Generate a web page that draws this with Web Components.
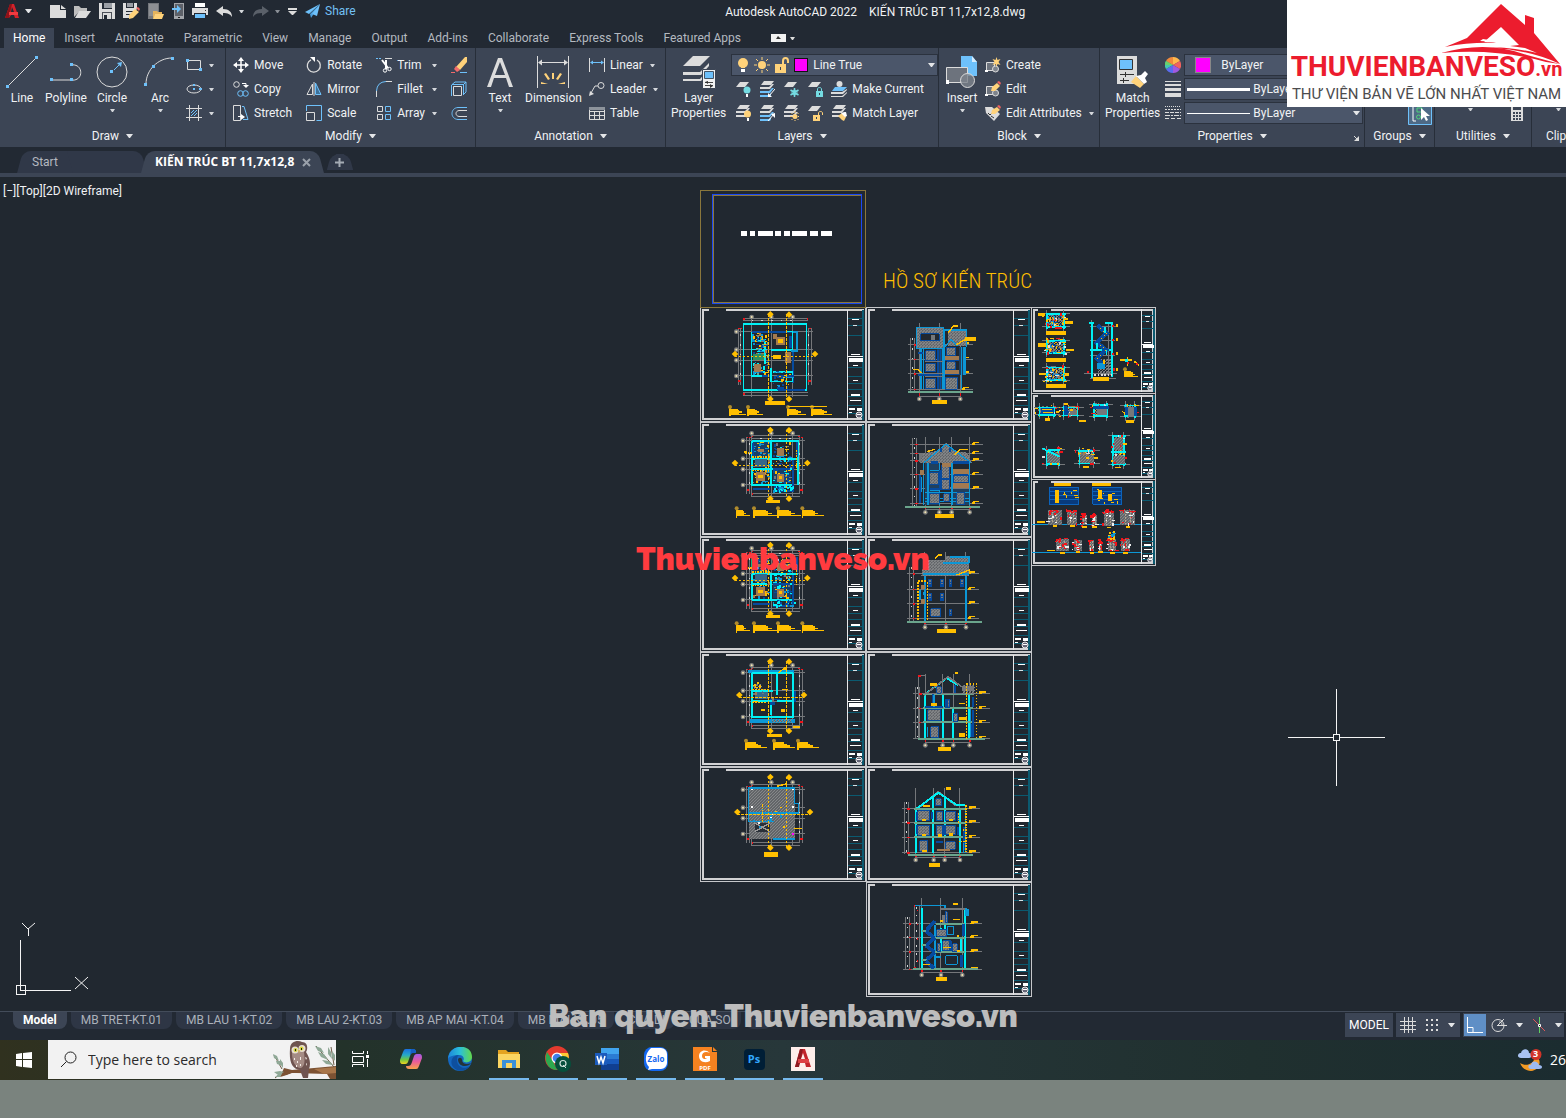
<!DOCTYPE html>
<html lang="en">
<head>
<meta charset="utf-8">
<meta name="viewport" content="width=device-width, initial-scale=1">
<title>Autodesk AutoCAD 2022</title>
<style>
  html, body { margin: 0; height: 100%; }
  body {
    background: #7a837e;
    color: #f0f2f4;
    font-family: Roboto, "Noto Sans", sans-serif;
    font-size: 12px;
    line-height: 16px;
    overflow: hidden;
  }
</style>
</head>
<body>
<cad-app></cad-app>

<script>
/* ---------- icons: [width, height, markup] ---------- */
const W = '#dcdcdc', BL = '#6ec1fb', YE = '#ffd27a', TE = '#74dbe2';
const SHEETS = `<g fill="${W}"><path d="M5 0h10l-3 4H2z"/><path d="M1 6h9l3-3h2l-4 5H1z"/><path d="M1 10h9l3-3h2l-4 5H1z"/></g>`;
const ONE_SHEET = `<path d="M5 1h9l-4 5H1z" fill="${W}"/>`;
const MIX_SHEETS = `<path d="M5 0h10l-3 4H2z" fill="${W}"/><path d="M1 6h9l3-3h2l-4 5H1z" fill="${W}"/><path d="M1 10h9l3-3h2l-4 5H1z" fill="${BL}"/><path d="M1 14h9l2-2v2l-1 2H1z" fill="${BL}"/>`;

const ICONS = {
  logoA: [16, 16, `<path d="M1 15 6 1h4l5 14h-4l-1-3H7l-2 3zM7 9h3L8 4z" fill="#d3222a"/><path d="M1 15 6 1h2L5 15z" fill="#8e1218"/><path d="M5 9h9v3H5z" fill="#ef3b40"/>`],
  caret: [7, 4, `<path d="M0 0h7L4 4H3z" fill="#e4e6e8"/>`],
  caretS: [5, 3, `<path d="M0 0h5L3 3H2z" fill="#d4d7db"/>`],
  caretDim: [5, 3, `<path d="M0 0h5L3 3H2z" fill="#8a8f96"/>`],
  fileNew: [16, 13, `<path d="M0 0h10v5h6v8H0z" fill="${W}"/><path d="M11 0l5 4h-5z" fill="${W}"/>`],
  open: [17, 13, `<path d="M0 12V1h5l2 2h6v3H6z" fill="#bdbdbd"/><path d="M5 6h12l-5 7H1z" fill="${W}"/>`],
  save: [16, 16, `<path d="M0 0h3v6h10V0h3v16H0z" fill="${W}"/><path d="M5 0h8v5H5z" fill="#9a9ea4"/><path d="M3 9h10v7H3z" fill="#4c5058"/><path d="M4 10h8v6H4z" fill="${W}"/><path d="M5 12h3v4H5z" fill="#222933"/>`],
  saveAs: [17, 16, `<path d="M0 0h3v5h8V0h3v6l-7 9H0z" fill="${W}"/><path d="M4 0h6v4H4z" fill="#9a9ea4"/><path d="M3 8h7v1H3zM3 11h5v1H3z" fill="#222933"/><path d="M6 12l6-6 4 3-6 6-4 1z" fill="${YE}"/><path d="M13 5l2-1 2 2-1 2z" fill="#f0625f"/>`],
  webOpen: [16, 16, `<path d="M0 0h11v10H6v6H0z" fill="#74777c"/><path d="M1 1h9v12H1z" fill="#8d8f93"/><path d="M5 8h4l1 1h4v2H7l-2 5z" fill="#e5b35c"/><path d="M7 11h9l-2 5H5z" fill="${YE}"/>`],
  webSave: [12, 16, `<path d="M2 0h10v16H2z" fill="#a2a5aa"/><path d="M3 1h8v12H3z" fill="#5d6169"/><path d="M6 14h2v1H6z" fill="#222"/><path d="M0 5h5V2l4 4-4 4V7H0z" fill="${BL}"/>`],
  print: [16, 16, `<path d="M3 0h10v4H3z" fill="#fff"/><path d="M0 5h16v7h-2v-2H2v2H0z" fill="${W}"/><path d="M3 11h10v4H3z" fill="${BL}"/><path d="M13 7h1v1h-1z" fill="#333"/>`],
  undo: [17, 11, `<path d="M7 0v3c6 0 9 3 9 8-2-3-4-4-9-4v3L0 5z" fill="${W}"/>`],
  redo: [17, 11, `<path d="M10 0v3C4 3 1 6 1 11c2-3 4-4 9-4v3l7-5z" fill="#5a6069"/>`],
  custom: [9, 7, `<path d="M0 0h9v2H0zM0 3h9L5 7H4z" fill="${W}"/>`],
  send: [16, 14, `<path d="M15 0 0 8l4 2z" fill="${BL}"/><path d="M15 0 5 10l1 4 2-3z" fill="#4b9fdd"/><path d="M15 0 7 10l5 2z" fill="${BL}"/>`],
  minimize: [24, 8, `<path d="M0 0h15v8H0z" fill="#f2f2f2"/><path d="M5 5l2-3 3 3z" fill="#333"/><path d="M19 3h5l-2 3h-1z" fill="${W}"/>`],
  line: [32, 32, `<path d="M2 30 30 2" stroke="${W}" fill="none"/><path d="M0 29h3v3H0zM29 0h3v3h-3z" fill="${BL}"/>`],
  polyline: [32, 32, `<path d="M1 24h20M21 9c13-2 13 17 0 15" stroke="${W}" fill="none"/><path d="M0 22h3v3H0zM20 22h3v3h-3zM20 7h3v3h-3z" fill="${BL}"/>`],
  circle: [32, 32, `<circle cx="16" cy="16" r="15" stroke="${W}" fill="none"/><path d="M18 14l7-7" stroke="${BL}"/><path d="M26 6l-5 1 4 4zM14 14h3v3h-3z" fill="${BL}"/>`],
  arc: [32, 32, `<path d="M2 28C2 14 14 2 28 2" stroke="${W}" fill="none"/><path d="M0 27h3v3H0zM8 9h3v3H8zM27 1h3v3h-3z" fill="${BL}"/>`],
  rect: [16, 16, `<path d="M1.500 3.500h13v9h-13z" stroke="${W}" fill="none"/><path d="M0 2h3v3H0zM13 11h3v3h-3z" fill="${BL}"/>`],
  ellipse: [16, 16, `<ellipse cx="8" cy="8" rx="7" ry="4" stroke="${W}" fill="none"/><path d="M7 7h2v2H7zM7 3h2v2H7zM13 7h3v2h-3z" fill="${BL}"/>`],
  hatch: [16, 16, `<path d="M3.500 0v16M12.500 0v16M0 3.500h16M0 12.500h16" stroke="${W}"/><path d="M5 8l3-3M5 11l6-6M8 11l3-3" stroke="${BL}"/>`],
  move: [16, 16, `<path d="M8 2v12M2 8h12" stroke="#fff" stroke-width="1.500"/><path d="M8 0l3 4H5zM8 16l3-4H5zM0 8l4-3v6zM16 8l-4-3v6z" fill="#fff"/>`],
  copy: [16, 16, `<circle cx="3.500" cy="3.500" r="2.800" stroke="${W}" fill="none"/><path d="M9 2.500h4V5" stroke="#fff" fill="none"/><path d="M10 4h6l-3 3z" fill="#fff"/><circle cx="7.500" cy="12.500" r="2.800" stroke="${BL}" fill="none"/><circle cx="12.500" cy="12.500" r="2.800" stroke="${BL}" fill="none"/>`],
  stretch: [16, 16, `<path d="M.5.500h7v15h-7z" stroke="${W}" fill="none"/><path d="M9 1.500h2l4 13h-5" stroke="${BL}" fill="none"/><path d="M5 11.500h4" stroke="#fff"/><path d="M8 9l4 3-4 3z" fill="#fff"/>`],
  rotate: [16, 16, `<path d="M11 3a6.500 6.500 0 1 1-6-.2" stroke="${W}" fill="none" stroke-width="1.300"/><path d="M4 0h5v5z" fill="#fff"/>`],
  mirror: [16, 16, `<path d="M6.500 3v10.500H1z" stroke="${W}" fill="none"/><path d="M8 1v14" stroke="${W}"/><path d="M9.500 2v11.500H15z" stroke="${BL}" fill="#3f729b"/>`],
  scale: [16, 16, `<path d="M.5 6V.5h15v15h-5" stroke="${BL}" fill="none"/><path d="M.5 7.500h8v8h-8z" stroke="${W}" fill="none"/>`],
  trim: [16, 16, `<path d="M0 1.500h6" stroke="${BL}" stroke-dasharray="2 1"/><path d="M9 1.500h7" stroke="${W}"/><path d="M6 3l6 8M10 3l0 9" stroke="#fff" stroke-width="2"/><circle cx="13.500" cy="12" r="1.700" stroke="#fff" fill="none"/><circle cx="9" cy="13.500" r="1.700" stroke="#fff" fill="none"/>`],
  fillet: [16, 16, `<path d="M.5 10v6M10 .5h6" stroke="${W}"/><path d="M.5 10Q1 1 10 .5" stroke="${BL}" fill="none"/>`],
  array: [16, 16, `<path d="M1.500 1.500h5v5h-5zM1.500 9.500h5v5h-5z" stroke="${W}" fill="none"/><path d="M9.500 1.500h5v5h-5zM9.500 9.500h5v5h-5z" stroke="${BL}" fill="none"/>`],
  erase: [16, 16, `<path d="M16 0v5l-7 8-4-3 9-10z" fill="${YE}"/><path d="M5 9l4 4-3 2-3-3z" fill="#f26a6a"/><path d="M0 15.500h4" stroke="#f26a6a"/><path d="M9 15.500h7" stroke="${BL}"/>`],
  explode: [16, 16, `<path d="M2.500 5.500h8v9h-8z" stroke="${W}" fill="none"/><path d="M.5 15V4L4 1h11v10l-3 3M1 3.500h11.500V14M12 4l3-3" stroke="${BL}" fill="none"/>`],
  offset: [16, 16, `<path d="M16 2.500H7C-1 3-1 14 7 14.500h9" stroke="${BL}" fill="none"/><path d="M16 5.500H8C4 6 4 11 8 11.500h8" stroke="${W}" fill="none"/>`],
  text: [32, 32, `<path d="M3 31 14 2h4l11 29h-4l-3-9H10l-3 9zm8-12h10L16 6z" fill="${W}"/>`],
  dimension: [32, 32, `<path d="M.5 0v32M31.500 0v32M2 6.500h28" stroke="${W}"/><path d="M1 6.500l4-3v6zM31 6.500l-4-3v6z" fill="${W}"/><path d="M15 17h2v6h-2zM7 18l2-1 4 6-2 1zM25 18l-2-1-4 6 2 1zM4 26l7 2H4zM28 26l-7 2h7z" fill="${YE}"/>`],
  linear: [16, 16, `<path d="M.5 1v14M15.500 1v14" stroke="${W}"/><path d="M2 5.500h12" stroke="${BL}"/><path d="M1 5.500l3-2v4zM15 5.500l-3-2v4z" fill="${BL}"/>`],
  leader: [16, 16, `<circle cx="12" cy="4.500" r="3" stroke="${W}" fill="none"/><path d="M9 5H6l-4 7" stroke="${W}" fill="none"/><path d="M0 15l1-5 4 3z" fill="${W}"/>`],
  table: [16, 16, `<path d="M.5 2.500h15v12H.5zM0 6.500h16M0 10.500h16M5.500 6v8M10.500 6v8" stroke="${W}" fill="none"/><path d="M0 2h16v3H0z" fill="#8d939b"/>`],
  layerProps: [34, 34, `<g fill="${W}"><path d="M11 0h17L18 10H1z"/><path d="M1 16h17l9-9v3l-8 9H1z"/><path d="M1 23h17l7-8v3l-6 7H1z"/></g><path d="M20.500 13.500h13v19h-13z" fill="#f2f2f2" stroke="#3c4555"/><path d="M22.500 15.500h9v7h-9z" fill="${BL}" stroke="#456"/><path d="M23 26.500h8M23 29.500h8" stroke="#444"/><path d="M26 25v3l-3-2zM28 28l3 2-3 2z" fill="#333"/>`],
  bulb: [12, 16, `<circle cx="6" cy="6" r="5" fill="${YE}"/><path d="M4 9h4v2H4z" fill="${YE}"/><path d="M4 12h4v3H4z" fill="#fff"/>`],
  sun: [16, 16, `<circle cx="8" cy="8" r="4" fill="${YE}"/><path d="M8 0v3M8 13v3M0 8h3M13 8h3M2 2l2 2M12 12l2 2M14 2l-2 2M2 14l2-2" stroke="${YE}"/>`],
  unlock: [14, 16, `<path d="M0 7h11v9H0z" fill="${YE}"/><path d="M8 7V4c0-4 5-4 5 0v2" stroke="${YE}" stroke-width="2" fill="none"/><path d="M5 10h1v3H5z" fill="#3c4555"/>`],
  layOff: [16, 16, `${ONE_SHEET}<circle cx="12" cy="9" r="3.500" fill="${TE}"/><path d="M11 13h2v3h-2z" fill="#fff"/>`],
  layIso: [16, 16, `${MIX_SHEETS}<path d="M16 8l-6 7" stroke="#fff"/><path d="M9 16v-4l4 4z" fill="#fff"/>`],
  layFrz: [16, 16, `${ONE_SHEET}<path d="M11.500 7v9M7.500 9l8 5M15.500 9l-8 5" stroke="${TE}" stroke-width="1.500"/><circle cx="11.500" cy="11.500" r="2.500" fill="none" stroke="${TE}"/>`],
  layLock: [16, 16, `${ONE_SHEET}<path d="M9 10h7v6H9z" fill="${TE}"/><path d="M10.500 10V8c0-2 4-2 4 0v2" stroke="${TE}" fill="none"/><path d="M12 12h1v2h-1z" fill="#345"/>`],
  layOn: [16, 16, `${SHEETS}<circle cx="12.500" cy="9" r="3.500" fill="${YE}"/><path d="M12 13h2v3h-2z" fill="#fff"/>`],
  layUniso: [16, 16, `${MIX_SHEETS}<path d="M15 9l-6 7" stroke="#fff"/><path d="M16 8v5l-4-4z" fill="#fff"/>`],
  layThaw: [16, 16, `${SHEETS}<circle cx="12" cy="11.500" r="2.500" fill="${YE}"/><path d="M12 6v2M12 15v1M7 11.500h2M15 11.500h1M8.500 8l1 1M15.500 8l-1 1M8.500 15l1-1M15.500 15l-1-1" stroke="${YE}"/>`],
  layUnlock: [16, 16, `${ONE_SHEET}<path d="M6 10h7v6H6z" fill="${YE}"/><path d="M11.500 10V8c0-2 4-2 4 0v2" stroke="${YE}" fill="none"/><path d="M9 12h1v2H9z" fill="#345"/>`],
  makeCur: [16, 16, `<path d="M4 6h12l-4 4H1z" fill="${BL}"/><circle cx="8.500" cy="3" r="3" fill="${W}"/><path d="M0 11h11l5-3v1l-4 4H0zM0 15h11l5-4v1l-4 4H0z" fill="${W}"/>`],
  matchLay: [16, 16, `${SHEETS}<path d="M7 11l4-3 4 4-2 4-2-1z" fill="${YE}"/><path d="M10 8l5-1 1 4-2 1z" fill="#fff"/>`],
  insert: [32, 34, `<path d="M15 0h11l5 6v14H15z" fill="${BL}"/><path d="M26 0v6h5z" fill="#d5ecfd"/><path d="M.5 11.500h21v15H.5z" stroke="${W}" fill="#6d737d"/><circle cx="21.500" cy="24.500" r="7" stroke="${W}" fill="#7d838ccc"/><path d="M0 24h3v4H0z" fill="#fff"/>`],
  create: [16, 16, `<path d="M1.500 5.500h8v8h-8z" stroke="${W}" fill="#6d737d"/><circle cx="10.500" cy="12" r="3" stroke="${W}" fill="#7d838c"/><path d="M11.500 0l1 3 3-1-2 3 2 3-3-1-1 3-1-3-3 1 2-3-2-3 3 1z" fill="${YE}"/><path d="M0 13h3v2H0z" fill="#fff"/>`],
  edit: [16, 16, `<path d="M1.500 5.500h8v8h-8z" stroke="${W}" fill="#6d737d"/><circle cx="10.500" cy="12" r="3" stroke="${W}" fill="#7d838c"/><path d="M6 10l1-4 5-4 3 3-5 5z" fill="${YE}"/><path d="M12 1l2-1 2 2-1 2z" fill="#f0625f"/><path d="M0 13h3v2H0z" fill="#fff"/>`],
  editAttr: [16, 16, `<path d="M0 2h7l8 7-6 7-8-8z" fill="${W}"/><path d="M3 8l2 2 2-2M6 11l3 2" stroke="#333" fill="none"/><path d="M6 9l1-4 5-3 3 3-5 4z" fill="${YE}"/><path d="M12 1l2-1 2 2-1 2z" fill="#f0625f"/>`],
  matchProps: [32, 34, `<path d="M0 0h20v28H0z" fill="${W}"/><path d="M2.500 3.500h13v10h-13z" fill="${BL}" stroke="#333"/><path d="M3 18.500h14M3 24.500h9M8.500 16v5M6.500 22v5" stroke="#333"/><path d="M14 26l5-6 8 8-4 4z" fill="${YE}"/><path d="M19 20l5-1 4-4 3 3-3 4 2 4-3 2z" fill="#fff"/>`],
  wheel: [16, 16, `<path d="M8 8V0a8 8 0 0 1 7 4z" fill="#ffb84d"/><path d="M8 8l7-4a8 8 0 0 1 0 8z" fill="#f0625f"/><path d="M8 8l7 4a8 8 0 0 1-7 4z" fill="#a05ae0"/><path d="M8 8v8a8 8 0 0 1-7-4z" fill="#5a6cf0"/><path d="M8 8l-7 4a8 8 0 0 1 0-8z" fill="#45c8b0"/><path d="M8 8 1 4a8 8 0 0 1 7-4z" fill="#f08a3c"/><path d="M8 8 1 4a8 8 0 0 0-1 4z" fill="#6bd06b"/>`],
  lineWt: [16, 16, `<path d="M0 0h16v1H0zM0 3h16v2H0zM0 7h16v3H0zM0 12h16v4H0z" fill="${W}"/>`],
  lineTp: [16, 16, `<g stroke="${W}"><path d="M0 1.500h16" stroke-dasharray="1 1"/><path d="M0 4.500h16" stroke-dasharray="2 1"/><path d="M0 7.500h16" stroke-dasharray="4 1"/><path d="M0 10.500h16" stroke-dasharray="5 1 2 1"/><path d="M0 13.500h16" stroke-dasharray="4 2"/></g>`],
  launch: [5, 5, `<path d="M0 0l3 3" stroke="${W}"/><path d="M5 0v5H0z" fill="${W}"/>`],
  group: [24, 22, `<path d="M.5.500h23v21H.5z" fill="#4e6a86" stroke="${BL}"/><path d="M8 3H5v15h3" stroke="#fff" fill="none"/><path d="M9 5h5v4H9z" stroke="#4fd27a" fill="none"/><circle cx="10.500" cy="14" r="2" stroke="#4fd27a" fill="none"/><path d="M13 5v12l3-3 2 4 2-1-2-4h4z" fill="#fff"/>`],
  calc: [12, 16, `<path d="M0 0h12v16H0z" fill="${W}"/><path d="M2 2h8v3H2zM2 7h2v2H2zM5 7h2v2H5zM8 7h2v2H8zM2 10h2v2H2zM5 10h2v2H5zM8 10h2v2H8zM2 13h2v2H2zM5 13h2v2H5zM8 13h2v2H8z" fill="#3c4555"/>`],
  close: [9, 9, `<path d="M1 1l7 7M8 1 1 8" stroke="#9aa1aa" stroke-width="2"/>`],
  plus: [9, 9, `<path d="M4.500 0v9M0 4.500h9" stroke="#a4abb4" stroke-width="2"/>`],
  grid: [16, 16, `<path d="M4.500 0v16M8.500 0v16M12.500 0v16M0 4.500h16M0 8.500h16M0 12.500h16" stroke="${W}"/>`],
  snap: [14, 14, `<path d="M1 1h2v2H1zM6 1h2v2H6zM11 1h2v2h-2zM1 6h2v2H1zM6 6h2v2H6zM11 6h2v2h-2zM1 11h2v2H1zM6 11h2v2H6zM11 11h2v2h-2z" fill="${W}"/>`],
  ortho: [22, 22, `<path d="M0 0h22v22H0z" fill="#5f8fc6"/><path d="M3.500 3v15.500H19" stroke="#fff" fill="none"/><path d="M4 13.500h5V18" stroke="#fff" fill="none"/>`],
  polar: [16, 16, `<circle cx="7" cy="8.500" r="6" stroke="${W}" fill="none"/><path d="M6 8.500h10M6 9l7-7M11 8c0-3-2-3-3-3" stroke="${W}" fill="none"/>`],
  track: [14, 16, `<path d="M1 2l12 12" stroke="#e05a5a"/><path d="M7.500 0v16" stroke="#5fd05f"/><path d="M6.500 7.500h2v2h-2z" fill="#222" stroke="#fff"/>`],
  windows: [16, 16, `<path d="M0 2l6-1v6H0zM7 1l9-1v7H7zM0 8h6v7l-6-1zM7 8h9v8l-9-1z" fill="#fff"/>`],
  search: [17, 17, `<circle cx="10.500" cy="6.500" r="5.500" stroke="#222" fill="none"/><path d="M6.500 10.500 1 16" stroke="#222"/>`],
  taskView: [17, 16, `<path d="M.5 0v2.500h11V0M.5 16v-2.500h11V16M.5 5.500h11v6H.5zM15.500 0v3M15.500 8v8" stroke="#fff" fill="none"/><path d="M14 4h3v3h-3z" fill="#fff"/>`],
  copilot: [22, 22, `<defs><linearGradient id="g1" x2="0" y2="1"><stop offset="0" stop-color="#1a6fe0"/><stop offset=".4" stop-color="#25a8c8"/><stop offset=".7" stop-color="#6cc644"/><stop offset="1" stop-color="#f3d21f"/></linearGradient><linearGradient id="g2" x2="0" y2="1"><stop offset="0" stop-color="#a55be8"/><stop offset=".5" stop-color="#e85b9a"/><stop offset="1" stop-color="#f6a24a"/></linearGradient></defs><path d="M6 1h7c2 0 3 1 3 3h-2c-2 0-3 1-4 4l-2 6c-1 2-2 2-4 2H3c-3 0-3-2-3-4l3-8c1-2 1-3 3-3z" fill="url(#g1)"/><path d="M16 21H9c-2 0-3-1-3-3h2c2 0 3-1 4-4l2-6c1-2 2-2 4-2h1c3 0 3 2 3 4l-3 8c-1 2-1 3-3 3z" fill="url(#g2)"/><path d="M11 1h2c2 0 3 1 3 4h-2c-2 0-3 0-4 3z" fill="#155fc4"/>`],
  edge: [24, 24, `<defs><linearGradient id="e1"><stop offset="0" stop-color="#1c86dc"/><stop offset=".5" stop-color="#2bc0d8"/><stop offset="1" stop-color="#63d94a"/></linearGradient></defs><circle cx="12" cy="12" r="12" fill="#1467bf"/><path d="M0 12C1-4 24-4 24 10c0 5-6 7-9 4 2-3 0-6-4-6C6 8 1 9 0 12z" fill="url(#e1)"/><path d="M9 13c0 7 7 10 13 6-4 6-13 6-17 1-4-6 0-12 6-12-2 1-2 3-2 5z" fill="#0e4f9e"/><path d="M10 13c0-3 4-3 4 0 0 4 5 5 9 3-2 4-12 5-13-3z" fill="#24343a"/>`],
  folder: [22, 18, `<path d="M0 0h8l2 2h11v15H0z" fill="#e4a421"/><path d="M0 4h22v14H0z" fill="#fbd662"/><path d="M4 10h14v8H4z" fill="#3c91d8"/><path d="M8 13h6v5H8z" fill="#fbd662"/>`],
  chrome: [26, 26, `<circle cx="12" cy="12" r="12" fill="#e33b2e"/><path d="M2 6l6 9 4 9C3 24-2 14 2 6z" fill="#2da94f"/><path d="M12 7h11c3 8-3 17-11 17l5-9z" fill="#fcc934"/><circle cx="12" cy="12" r="5.500" fill="#fff"/><circle cx="12" cy="12" r="4.300" fill="#3f7fea"/><circle cx="18" cy="18" r="8" fill="#06503c"/><circle cx="18" cy="17.500" r="3" fill="none" stroke="#cfe3dc" stroke-width="1.200"/><path d="M18 19l3 3" stroke="#cfe3dc"/>`],
  zaloBubble: [24, 24, `<path d="M0 8a8 8 0 0 1 8-8h8a8 8 0 0 1 8 8v8a8 8 0 0 1-8 8H8a8 8 0 0 1-8-8z" fill="#1468f0"/><path d="M7 1h10a6 6 0 0 1 6 6v9a6 6 0 0 1-6 6H8l-4 1 1-3C1 16 0 7 7 1z" fill="#fff"/>`],
  foxit: [24, 24, `<path d="M0 0h19v5h5v19H0z" fill="#f58220"/><path d="M20 0l4 4h-4z" fill="#f58220"/><path d="M17 6C12 1 6 4 6 9s5 8 11 5V9h-5v2h2c-2 2-5 1-5-2 0-4 4-5 8-3z" fill="#fff"/>`],
  acad: [24, 24, `<path d="M0 0h24v24H0z" fill="#fdeeea"/><path d="M4 20 9 2h5l6 18h-5l-1-4H9l-2 4zM10 12h4l-2-6z" fill="#c2242b"/><path d="M4 20 9 2h3L8 20z" fill="#8e1a20"/><path d="M7 12h11v4H7z" fill="#dd4044"/>`],
  word: [24, 22, `<path d="M6 0h18v6H6z" fill="#41a5ee"/><path d="M6 6h18v5H6z" fill="#2b7cd3"/><path d="M6 11h18v5H6z" fill="#185abd"/><path d="M6 16h18v6H6z" fill="#103f91"/><path d="M0 5h12v12H0z" fill="#1b5bbd"/><path d="M2 8l2 7 2-6 2 6 2-7" stroke="#fff" stroke-width="1.500" fill="none"/>`],
  weather: [24, 22, `<path d="M2 14c6 4 14 1 15-6 8 1 5 14-4 14-5 0-9-3-11-8z" fill="#f49b24"/><path d="M3 9c-5 0-3-6 0-5 1-5 8-5 8 0 4 0 3 5 0 5z" fill="#a9c3f2"/><path d="M13 20c-4 0-3-5 0-4 1-5 7-4 8 0 4 0 4 4 0 4z" fill="#9dbaf0"/><circle cx="18" cy="5.500" r="5.500" fill="#d13428"/>`],
  owl: [64, 38, `<path d="M12 27l8 2 22-2 22-2v13H58l-3-5-33-1-14 4z" fill="#7c5233"/><path d="M42 28l22-2v6l-12 1z" fill="#a8764a"/><path d="M20 32l33 2 4 4H6z" fill="#f2f2f2"/><path d="M10 28 2 14M12 30l-9 7M62 26 44 5M62 24l-3-18" stroke="#6b5a44" fill="none"/><path d="M1 13l4 2 2 5-5-3zM4 20l5 0 2 5-6-2zM8 18l3 4v5l-3-4zM2 31l6-1 4 1-6 3zM3 36l5-4 3-1-3 5zM43 5l6 2 3 5-6-2zM46 11l6 2 4 6-7-3zM56 6l3 5 1 7-4-5zM60 10l3 4v6l-3-4zM50 19l7 1 4 4-7-1z" fill="#8fa896"/><path d="M18 8c0-8 8-9 12-7 6 0 6 7 4 10 4 6 5 12 3 17l-1 9h-5l-3-8c-8-1-11-8-10-21z" fill="#6f5450"/><path d="M20 12c2-4 10-6 12-1 1 8 1 14-3 16-6 0-9-7-9-15z" fill="#a58c85"/><path d="M22 17h1v2h-1zM25 20h1v2h-1zM28 16h1v3h-1zM24 24h1v2h-1zM28 23h1v2h-1zM33 16l2 1-1 2zM34 22l1 1-1 2z" fill="#f4ece6"/><circle cx="23" cy="9" r="3.500" fill="#e9e0d0"/><circle cx="30" cy="7.500" r="3.500" fill="#e9e0d0"/><circle cx="23.500" cy="9" r="2" fill="#d6d43a"/><circle cx="29.500" cy="7.500" r="2" fill="#d6d43a"/><path d="M23 8h1v2h-1zM29 7h1v2h-1z" fill="#222"/><path d="M26 9l2 0-1 4z" fill="#d8b25a"/>`]
};

const svg = name => {
  const [w, h, body] = ICONS[name];
  return `<svg width="${w}" height="${h}" viewBox="0 0 ${w} ${h}" aria-hidden="true">${body}</svg>`;
};

/* Registers an element whose shadow root is cloned from one template. */
function define(name, css, html, setup) {
  const template = document.createElement('template');
  template.innerHTML = `<style>
    svg { display: block; flex: none; }
    button { font: inherit; color: inherit; background: none; border: 0; padding: 0; margin: 0; cursor: pointer; }
    ${css}
  </style>${html}`;
  customElements.define(name, class extends HTMLElement {
    constructor() {
      super();
      this.attachShadow({ mode: 'open' }).append(template.content.cloneNode(true));
    }
    connectedCallback() {
      if (setup && !this.ready) {
        this.ready = true;
        setup(this, this.shadowRoot);
      }
    }
  });
}

define('cad-icon', `:host { display: inline-flex; flex: none; }`, ``, (el, root) => {
  root.innerHTML += svg(el.getAttribute('name'));
});

define('tool-button', `
  :host { display: block; white-space: nowrap; }
  button { display: flex; align-items: center; height: 24px; gap: 5px; width: 100%; text-align: left; }
  .caret { padding: 0 0 0 2px; margin-left: auto; }
  :host([size="large"]) button {
    flex-direction: column; height: 72px; gap: 0; padding-top: 3px;
    min-width: 42px; line-height: 15px; text-align: center;
  }
  :host([size="large"]) .pic { display: flex; justify-content: center; height: 32px; margin-bottom: 3px; }
  :host([size="large"]) .caret { margin: 3px auto 0; padding: 0; }
  :host([size="large"][arrow]) button { min-width: 46px; }
`, `<button type="button"><span class="pic"></span></button>`, (el, root) => {
  const button = root.querySelector('button');
  root.querySelector('.pic').innerHTML = svg(el.getAttribute('icon'));
  if (el.textContent.trim()) button.insertAdjacentHTML('beforeend', '<span><slot></slot></span>');
  else button.setAttribute('aria-label', el.getAttribute('label') || el.getAttribute('icon'));
  if (el.hasAttribute('arrow')) button.insertAdjacentHTML('beforeend', `<span class="caret">${svg('caretS')}</span>`);
});

define('prop-select', `
  :host { display: flex; align-items: center; box-sizing: border-box; height: 22px; border: 1px solid #2b323e; background: #4b566a; }
  ::slotted(*) { flex: none; }
  select { flex: 1; min-width: 0; height: 20px; padding: 0; border: 0; background: none; color: inherit; font: inherit; appearance: none; }
  svg { margin: 0 2px; }
`, `<slot></slot><select><option></option></select>${svg('caret')}`, (el, root) => {
  root.querySelector('option').textContent = el.getAttribute('value');
  root.querySelector('select').setAttribute('aria-label', el.getAttribute('label'));
});

define('ribbon-panel', `
  :host { display: flex; flex-direction: column; box-sizing: border-box; height: 99px; border-right: 1px solid #272e39; flex: none; position: relative; }
  .body { display: flex; flex: 1; padding: 5px 0 0; }
  button { display: flex; align-items: center; justify-content: center; gap: 7px; height: 22px; white-space: nowrap; }
`, `<div class="body"><slot></slot></div><button type="button"><span></span>${svg('caret')}</button>`, (el, root) => {
  root.querySelector('span').textContent = el.getAttribute('heading');
});

define('title-bar', `
  :host { display: grid; grid-template-columns: 4fr auto 3fr; align-items: center; height: 24px; padding-left: 4px; background: #222933; }
  .quick { display: flex; align-items: center; gap: 8px; margin-top: -2px; }
  .pair { display: flex; align-items: center; gap: 6px; }
  .app { gap: 5px; margin-right: 10px; }
  .share { display: flex; align-items: center; gap: 4px; color: #72c0f5; }
  .name { display: flex; gap: 12px; white-space: nowrap; }
`, `
  <div class="quick">
    <button class="pair app" aria-label="Application menu">${svg('logoA')}${svg('caret')}</button>
    <button aria-label="New">${svg('fileNew')}</button>
    <button aria-label="Open">${svg('open')}</button>
    <button aria-label="Save">${svg('save')}</button>
    <button aria-label="Save as">${svg('saveAs')}</button>
    <button aria-label="Open from web">${svg('webOpen')}</button>
    <button aria-label="Save to web">${svg('webSave')}</button>
    <button aria-label="Plot">${svg('print')}</button>
    <button class="pair" aria-label="Undo">${svg('undo')}${svg('caretS')}</button>
    <button class="pair" aria-label="Redo">${svg('redo')}${svg('caretDim')}</button>
    <button aria-label="Customize">${svg('custom')}</button>
    <button class="share">${svg('send')}Share</button>
  </div>
  <div class="name"><span>Autodesk AutoCAD 2022</span><span>KIẾN TRÚC BT 11,7x12,8.dwg</span></div>
`);

define('ribbon-tabs', `
  :host { display: flex; align-items: stretch; height: 20px; padding: 4px 4px 0; background: #222933; }
  button { padding: 0 10px; color: #b4b9c0; white-space: nowrap; }
  button.active { padding: 0 9px; background: #3c4555; color: #fff; }
  .min { padding-left: 20px; }
`, ``, (el, root) => {
  const names = ['Home', 'Insert', 'Annotate', 'Parametric', 'View', 'Manage', 'Output', 'Add-ins', 'Collaborate', 'Express Tools', 'Featured Apps'];
  root.innerHTML += names.map((n, i) => `<button type="button" class="${i ? '' : 'active'}">${n}</button>`).join('')
    + `<button class="min" aria-label="Minimize ribbon">${svg('minimize')}</button>`;
});

define('cad-ribbon', `
  :host { display: flex; overflow: hidden; background: #3c4555; }
  .col { display: flex; flex-direction: column; }
  .loose { align-items: flex-start; }
  .row { display: flex; gap: 8px; }
  .draw { width: 226px; } .modify { width: 250px; } .note { width: 190px; } .layers { width: 273px; }
  .block { width: 161px; } .props { width: 265px; } .groups { width: 70px; } .utils { width: 97px; } .clip { width: 94px; }
  .set { display: flex; gap: 14px; padding-left: 7px; }
  .big { display: flex; gap: 2px; padding: 0 3px 0 1px; }
  .pad { padding: 0 5px; }
  .shift { padding-left: 4px; }
  prop-select { margin: 1px 0; }
  .layerSel { width: 207px; gap: 5px; padding-left: 5px; }
  .propSel { width: 179px; gap: 3px; padding-left: 2px; }
  .first { gap: 10px; padding-left: 10px; }
  .sw { width: 12px; height: 12px; border: 1px solid #111; background: #f0f; }
  .first .sw { width: 14px; height: 14px; border-color: #888; }
  .thick { width: 63px; height: 3px; background: #fff; }
  .thin { width: 63px; height: 1px; background: #fff; }
  .corner { position: absolute; right: 5px; bottom: 6px; }
  .end { display: flex; flex: 1; align-items: flex-end; justify-content: flex-end; padding-right: 2px; }
  .utils .end { padding: 0 8px 4px 0; }
  .drop { margin: 0 auto 10px 33px; }
  .clip .drop { margin: 0 auto 14px 24px; }
`, `
  <ribbon-panel class="draw" heading="Draw">
    <div class="big">
      <tool-button size="large" icon="line">Line</tool-button>
      <tool-button size="large" icon="polyline">Polyline</tool-button>
      <tool-button size="large" icon="circle" arrow>Circle</tool-button>
      <tool-button size="large" icon="arc" arrow>Arc</tool-button>
    </div>
    <div class="col">
      <tool-button icon="rect" arrow></tool-button>
      <tool-button icon="ellipse" arrow></tool-button>
      <tool-button icon="hatch" arrow></tool-button>
    </div>
  </ribbon-panel>
  <ribbon-panel class="modify" heading="Modify">
    <div class="set">
      <div class="col"><tool-button icon="move">Move</tool-button><tool-button icon="copy">Copy</tool-button><tool-button icon="stretch">Stretch</tool-button></div>
      <div class="col"><tool-button icon="rotate">Rotate</tool-button><tool-button icon="mirror">Mirror</tool-button><tool-button icon="scale">Scale</tool-button></div>
      <div class="col"><tool-button icon="trim" arrow>Trim</tool-button><tool-button icon="fillet" arrow>Fillet</tool-button><tool-button icon="array" arrow>Array</tool-button></div>
      <div class="col"><tool-button icon="erase"></tool-button><tool-button icon="explode"></tool-button><tool-button icon="offset"></tool-button></div>
    </div>
  </ribbon-panel>
  <ribbon-panel class="note" heading="Annotation">
    <div class="big">
      <tool-button size="large" icon="text" arrow>Text</tool-button>
      <tool-button size="large" icon="dimension">Dimension</tool-button>
    </div>
    <div class="col loose shift">
      <tool-button icon="linear" arrow>Linear</tool-button>
      <tool-button icon="leader" arrow>Leader</tool-button>
      <tool-button icon="table">Table</tool-button>
    </div>
  </ribbon-panel>
  <ribbon-panel class="layers" heading="Layers">
    <div class="pad"><tool-button size="large" icon="layerProps">Layer<br>Properties</tool-button></div>
    <div class="col">
      <prop-select class="layerSel" value="Line True" label="Layer">
        <cad-icon name="bulb"></cad-icon><cad-icon name="sun"></cad-icon><cad-icon name="unlock"></cad-icon><span class="sw"></span>
      </prop-select>
      <div class="row shift">
        <tool-button icon="layOff"></tool-button><tool-button icon="layIso"></tool-button><tool-button icon="layFrz"></tool-button><tool-button icon="layLock"></tool-button><tool-button icon="makeCur">Make Current</tool-button>
      </div>
      <div class="row shift">
        <tool-button icon="layOn"></tool-button><tool-button icon="layUniso"></tool-button><tool-button icon="layThaw"></tool-button><tool-button icon="layUnlock"></tool-button><tool-button icon="matchLay">Match Layer</tool-button>
      </div>
    </div>
  </ribbon-panel>
  <ribbon-panel class="block" heading="Block">
    <tool-button size="large" icon="insert" arrow>Insert</tool-button>
    <div class="col loose">
      <tool-button icon="create">Create</tool-button>
      <tool-button icon="edit">Edit</tool-button>
      <tool-button icon="editAttr" arrow>Edit Attributes</tool-button>
    </div>
  </ribbon-panel>
  <ribbon-panel class="props" heading="Properties">
    <div class="pad"><tool-button size="large" icon="matchProps">Match<br>Properties</tool-button></div>
    <div class="col">
      <tool-button icon="wheel"></tool-button><tool-button icon="lineWt"></tool-button><tool-button icon="lineTp"></tool-button>
    </div>
    <div class="col" style="padding-left: 3px">
      <prop-select class="propSel first" value="ByLayer" label="Object color"><span class="sw"></span></prop-select>
      <prop-select class="propSel" value="ByLayer" label="Lineweight"><span class="thick"></span></prop-select>
      <prop-select class="propSel" value="ByLayer" label="Linetype"><span class="thin"></span></prop-select>
    </div>
    <cad-icon class="corner" name="launch"></cad-icon>
  </ribbon-panel>
  <ribbon-panel class="groups" heading="Groups"><div class="end"><cad-icon name="group"></cad-icon></div></ribbon-panel>
  <ribbon-panel class="utils" heading="Utilities"><div class="end"><cad-icon class="drop" name="caretS"></cad-icon><cad-icon name="calc"></cad-icon></div></ribbon-panel>
  <ribbon-panel class="clip" heading="Clipboard"><div class="end"><cad-icon class="drop" name="caretS"></cad-icon></div></ribbon-panel>
`);

define('file-tabs', `
  :host { display: flex; align-items: flex-end; height: 26px; padding-left: 20px; background: #222933; border-bottom: 4px solid #3c4555; }
  button { position: relative; display: flex; align-items: center; height: 22px; padding: 0 12px; color: #b4b9c0; isolation: isolate; white-space: nowrap; }
  button::before, button::after { content: ""; position: absolute; z-index: -1; top: 0; bottom: 0; width: 60%; background: #303848; }
  button::before { left: 0; border-radius: 8px 0 0 0; transform: skewX(-15deg); }
  button::after { right: 0; border-radius: 0 8px 0 0; transform: skewX(15deg); }
  .start { width: 124px; }
  .active { gap: 8px; padding: 0 12px 0 11px; width: 177px; font-family: "Open Sans", "Noto Sans", sans-serif; font-weight: bold; color: #fff; }
  .active::before, .active::after { background: #3c4555; }
  .add { width: 22px; height: 16px; margin: 0 0 3px 8px; padding: 0 6px; }
`, `
  <button type="button" class="start">Start</button>
  <button type="button" class="active">KIẾN TRÚC BT 11,7x12,8 ${svg('close')}</button>
  <button type="button" class="add" aria-label="New drawing">${svg('plus')}</button>
`);

/* ---------- drawing sheets ---------- */
const Y = '#ffbf00', C = '#00f0f4', B = '#0c97d6', D = '#064a9e', G = '#74777a', R = '#f0141a', BR = '#a27a50', GR = '#6aa58c', TL = '#0b5a70';

const line = (c, d, w = 3, dash = '') => `<path d="${d}" stroke="${c}" stroke-width="${w}" fill="none"${dash && ` stroke-dasharray="${dash}"`}/>`;
const fill = (c, ...rects) => `<path fill="${c}" d="${rects.map(([x, y, w, h]) => `M${x} ${y}h${w}v${h}h${-w}z`).join('')}"/>`;
const hatch = (...rects) => fill('url(#grain)', ...rects);
const diamond = (...pts) => `<path fill="${Y}" shape-rendering="auto" d="${pts.map(([x, y]) => `M${x - 10} ${y}l10-10 10 10-10 10z`).join('')}"/>`;
const bubble = (...pts) => pts.map(([x, y]) => `<g shape-rendering="auto"><circle cx="${x}" cy="${y}" r="7" fill="#808080"/><circle cx="${x}" cy="${y}" r="3" fill="#f3e6b0"/></g>`).join('');
/* A view drawn in thirds of a pixel, placed at x, y. */
const view = (x, y, ...parts) => `<g transform="translate(${x} ${y}) scale(.33333)">${parts.join('')}</g>`;

/* Small marks that stand for furniture and notes too dense to read. */
function scatter(seed, x, y, w, h, n, colors) {
  let s = seed * 7919, out = '';
  const next = m => {
    s = (s * 16807 + 11) % 2147483647;
    return Math.floor(s / 64) % m;
  };
  for (let i = 0; i < n; i++) {
    const px = x + next(Math.floor(w / 3)) * 3, py = y + next(Math.floor(h / 3)) * 3;
    const wide = next(2);
    out += fill(colors[next(colors.length)], [px, py, wide ? 3 + next(4) * 3 : 4, wide ? 4 : 3 + next(3) * 3]);
  }
  return out;
}

const note = (x, y, w, h = 28) => fill(Y, [x, y, 4, h], [x, y + 5, w * .5, 4], [x, y + 9, w * .6, 5], [x, y + 13, w * .75, 5], [x, y + 20, w, 3], [x, y + 17, w * .6, 3])
  + `<circle shape-rendering="auto" cx="${x + 2}" cy="${y}" r="6" fill="#b08b2c"/>`;

function sheet(x, y, s) {
  const k = v => Math.round(v * s);
  const r = (c, a, b, w, h) => `<rect x="${x + k(a)}" y="${y + k(b)}" width="${Math.max(1, k(w))}" height="${Math.max(1, k(h))}" fill="${c}"/>`;
  const W1 = k(165), H1 = k(114);
  return `<rect x="${x + .5}" y="${y + .5}" width="${W1}" height="${H1}" fill="none" stroke="#c6c7ca"/>
    <rect x="${x + 3}" y="${y + 3}" width="${W1 - 5}" height="${H1 - 5}" fill="none" stroke="#d2d2d4" stroke-width="2"/>
    ${r('#212830', 9, 2, 17, 2)}
    ${r('#e8e8ea', 147, 3, 1, 110)}
    ${[11, 18, 28, 60, 69, 76, 82, 89, 98, 106].map(v => r(TL, 148, v, 15, 1)).join('')}
    ${r(TL, 162, 3, 2, 110)}
    ${r('#fff', 152, 12, 7, 1)}${r('#d9e4e8', 153, 18, 4, 1)}
    ${r('#fff', 151, 47, 9, 1)}${r('#fff', 148, 49, 15, 1)}${r('#fff', 149, 51, 14, 4)}${r('#fff', 153, 58, 5, 1)}
    ${r('#fff', 153, 73, 5, 1)}${r('#fff', 151, 87, 9, 2)}${r('#fff', 150, 93, 11, 1)}
    ${r('#fff', 149, 101, 6, 2)}${r('#fff', 157, 101, 5, 3)}${r('#fff', 149, 105, 3, 1)}
    <circle shape-rendering="auto" cx="${x + k(159)}" cy="${y + k(108)}" r="${3 * s}" fill="#667" stroke="#eee"/>${r('#fff', 157, 107, 4, 1)}`;
}

/* Axes, dimensions, section marks and title shared by the floor plans. */
function planFrame(wide) {
  const l = wide ? 145 : 170, r = wide ? 370 : 345, t = wide ? 22 : 47, b = wide ? 258 : 232, top = wide ? 18 : 40, bx = wide ? 139 : 159;
  return line(G, `M185 ${top}V${b}M244 ${top}V${b}M308 ${top}V${b}M${bx} 62H${r}M${bx} 116H${r}M${bx} 148H${r}M${bx} 195H${r}M${l + 15} ${t}H${r - 15}M${l + 15} ${t + 8}H${r - 15}M${l + 15} ${b - 12}H${r - 15}M${l + 15} ${b - 3}H${r - 15}M${l} 50V222M${l + 8} 50V222M${r - 15} 50V222M${r - 6} 50V222`)
    + line('#d8d8d8', `M${l + 8} 70V200M${r - 15} 70V200M${l + 40} ${t + 8}H${r - 40}`, 3, '5 24')
    + fill(R, [l, 50, 5, 5], [l + 8, 50, 4, 5], [l, 208, 8, 5], [r - 16, 208, 10, 5], [r - 12, 50, 5, 5], [l + 15, t, 5, 5], [r - 20, t, 5, 5], [l + 15, b - 12, 5, 5])
    + bubble([185, top], [244, top], [308, top], [bx, 62], [bx, 116], [bx, 148], [bx, 195]);
}
const planMarks = (a, b, top, bot) => line(Y, `M235 ${top}V${bot}M290 ${top}V${bot}M${a} 136H${b}`, 4, '7 5')
  + diamond([241, top], [297, top + 1], [241, bot], [297, bot], [a, 129], [b, 129]);

function plan1() {
  return view(690, 311,
    planFrame(true),
    line(C, 'M161 40H350V238H161z', 5),
    line(D, 'M185 64H320M200 196H244M308 120V215M265 238H345', 6),
    line(C, 'M185 62V196H215M185 116H230M244 118H308V62H290M225 92V160M244 170V212H280M250 184H308V212H285', 5),
    line(B, 'M308 62H322V120H304M190 70V90H215V70', 6),
    scatter(7, 190, 66, 45, 120, 100, [Y, BR, GR, B, C, D]),
    fill(BR, [258, 78, 28, 24], [284, 122, 20, 34], [192, 160, 22, 24], [248, 70, 12, 14]),
    fill('#2e8f5c', [190, 128, 32, 18]),
    fill(Y, [250, 132, 24, 12], [264, 84, 14, 12], [274, 192, 8, 18]),
    line(D, 'M262 232H282M262 196H308M302 74V110', 8),
    scatter(19, 250, 180, 55, 50, 30, [B, D, Y]),
    planMarks(135, 375, 10, 264),
    fill(Y, [225, 270, 60, 11]),
    note(118, 288, 50), note(172, 288, 48), note(292, 288, 55), note(364, 288, 62),
    line(Y, 'M295 288H410'));
}

function plan2(y, seed, first) {
  return view(690, y,
    planFrame(false),
    fill('#173f68', [190, 66, 46, 48], [250, 150, 54, 40]),
    scatter(seed, 190, 66, 50, 125, 90, [Y, D, B, BR, B]),
    scatter(seed + 5, 250, 66, 56, 124, 90, [Y, D, D, C, B, G]),
    line(C, first ? 'M185 62H325V196M185 62V196H308M185 116H320M244 62V196M244 148H308M185 148H244' : 'M185 116H325M185 116V196M185 62V100M185 196H308M244 116V196M185 148H230M260 148H310', 6),
    line(D, 'M190 70V110M308 120V190M308 150V212H250M250 148H300M320 66V110M190 206H240', 6),
    fill(BR, [197, 156, 28, 26], [260, 84, 22, 24], [260, 162, 22, 24], [205, 88, 16, 8]),
    fill('#36688a', [194, 118, 38, 22]),
    fill(Y, [205, 164, 14, 9], [266, 168, 10, 10]),
    line(Y, 'M186 112H240M186 152H230M320 90V150M165 100H185', 5, '5 3'),
    scatter(seed + 9, 250, 196, 60, 18, 30, [B, C, D]),
    planMarks(135, 352, 30, 236),
    fill(Y, [228, 240, 42, 10], [162, 92, 9, 7]),
    note(138, 265, 42), note(190, 265, 75), note(262, 265, 70), note(335, 265, 66));
}

function plan4() {
  return view(690, 652,
    planFrame(false),
    fill(B, [175, 54, 138, 8], [180, 202, 135, 12]),
    hatch([192, 96, 24, 14], [245, 200, 60, 14]),
    line(C, 'M187 62V196H308V62M187 64H308M187 117H250M261 62V130M187 148H244V190M260 148H312', 6),
    fill('#36688a', [195, 120, 38, 22]), fill(D, [240, 150, 14, 8], [312, 116, 6, 34], [240, 140, 30, 4]),
    fill(Y, [275, 110, 20, 4], [272, 172, 14, 8], [212, 170, 14, 8], [282, 48, 8, 5]),
    scatter(88, 190, 90, 60, 60, 18, [Y, G, BR]),
    line(Y, 'M186 112H240M186 152H230', 4, '6 3'), line(Y, 'M265 62L290 44M310 225H330', 4),
    planMarks(148, 342, 28, 237),
    fill(Y, [230, 245, 46, 10]),
    note(166, 266, 64), note(250, 266, 66), note(322, 266, 64));
}

function plan5() {
  return view(690, 769,
    planFrame(false),
    fill('#64676a', [176, 58, 138, 152]), hatch([176, 58, 138, 152], [250, 204, 62, 8]),
    line(B, 'M314 58H176V160M314 58V104H326V132H250M176 132H244V158H176M250 210H314', 5),
    fill('#2a3038', [194, 162, 46, 26]), line('#9a9a9a', 'M194 162L240 188M240 162L194 188', 4),
    line(Y, 'M218 106V160', 4, '8 4'), line(Y, 'M260 52L292 44M312 178H336', 4),
    scatter(31, 190, 90, 110, 100, 14, [Y, '#eee', B]),
    fill('#fff', [184, 60, 5, 4], [306, 60, 5, 4], [184, 112, 5, 4], [306, 112, 5, 4], [240, 144, 5, 4]),
    fill('#f0f', [306, 192, 5, 5]),
    planMarks(142, 360, 24, 236),
    fill(Y, [222, 250, 42, 13]));
}

/* Axes and level lines behind an elevation or a section. */
function levels(x0, x1, top, ys, axes, ground, bot) {
  return line(G, axes.map(a => `M${a} ${top}V${bot}`).join('') + ys.map(v => `M${x0} ${v}H${x1}`).join(''))
    + line(G, `M${x0 + 8} ${ys[0] - 20}V${ground}M${x0 + 20} ${ys[0] - 20}V${ground}M${axes[0]} ${bot - 8}H${axes[axes.length - 1]}`)
    + line('#d8d8d8', `M${x0 + 14} ${ys[0] - 20}V${ground}`, 3, '5 24')
    + fill(R, ...ys.map(v => [x0 + 16, v - 2, 8, 5]), ...axes.map(a => [a - 2, bot - 18, 5, 9]))
    + fill(Y, ...ys.map(v => [x1 - 32, v - 8, 20, 5]), ...ys.map(v => [x1 - 34, v - 3, 10, 4]))
    + bubble(...axes.map(a => [a, bot]));
}

const hollow = (c, list) => list.map(([x, y, w, h]) => line(c, `M${x} ${y}h${w}v${h}h${-w}z`)).join('');
const windows = list => fill(G, ...list) + hatch(...list) + hollow(D, list);

const elev1 = () => view(690, 180,
  levels(655, 850, 428, [495, 538, 582, 628], [688, 748, 811], 635, 657),
  fill(G, [682, 443, 78, 62], [775, 450, 54, 48]), hatch([682, 443, 78, 62], [775, 450, 54, 48]),
  fill('#20405e', [742, 506, 18, 122], [808, 500, 14, 86]),
  line(B, 'M680 443H760V505H680zM760 450H830V500M765 500L783 478 803 498M757 505V628M762 450V628M693 505V628M700 505V628M815 500V628M822 500V585M827 500V585', 4),
  fill('#212830', [692, 462, 56, 20]), hollow(D, [[692, 462, 56, 20]]), fill(G, [723, 464, 12, 16]),
  windows([[707, 512, 31, 30], [707, 552, 31, 24], [707, 596, 31, 30], [770, 502, 26, 26], [770, 546, 26, 24], [766, 592, 36, 36]]),
  fill(BR, [766, 527, 40, 14], [764, 570, 42, 12]),
  line(D, 'M745 510V628M752 510V628M765 584H806M765 542H806M685 520H700M685 585H740', 5),
  line(G, 'M705 545H760M705 580H760M705 590H760', 3),
  line(Y, 'M775 458L790 438H803M798 494L830 477H858M670 568H685L694 580', 4), fill(Y, [826, 472, 32, 10]),
  line(GR, 'M655 635H848', 6), fill(Y, [725, 661, 46, 11]));

const elev2 = () => view(690, 420,
  levels(660, 880, 50, [73, 100, 122, 163, 206, 250], [706, 748, 785, 839], 258, 277),
  line(GR, 'M645 260H870', 6),
  fill(G, [686, 98, 20, 28], [706, 200, 130, 8]),
  fill('#20405e', [704, 130, 46, 126], [784, 206, 52, 50]),
  `<path d="M690 128L700 100 748 92 768 66 790 92 832 98 845 128z" fill="#74777a"/><path d="M690 128L700 100 748 92 768 66 790 92 832 98 845 128z" fill="url(#grain)"/>`,
  line(B, 'M702 128L768 72 842 128M700 130V255M714 130V255M748 128V255M786 128V255M838 128V255M706 218H836M706 235H836M706 245H836', 4),
  windows([[720, 158, 26, 36], [720, 220, 28, 30], [762, 222, 18, 22], [800, 218, 24, 36], [756, 136, 24, 40], [756, 180, 24, 30], [792, 166, 44, 22]]),
  fill(BR, [690, 150, 12, 14], [790, 148, 46, 14], [790, 190, 46, 14], [756, 130, 26, 12]),
  line(D, 'M690 166V250M722 128H745M790 128H836M792 166H834M754 84V96M780 84V96M720 208H748M752 150V210', 7),
  line(Y, 'M710 95L735 88M793 105L810 88H834', 4),
  line(B, 'M694 170V215M720 152H746M720 212H746', 3),
  fill(Y, [736, 282, 56, 13]));

const elev3 = () => view(690, 535,
  levels(652, 868, 50, [116, 163, 206, 250], [705, 768, 828], 258, 277),
  `<path d="M694 122L702 74 768 74 768 64 836 64V124z" fill="#74777a"/><path d="M694 122L702 74 768 74 768 64 836 64V124z" fill="url(#grain)"/>`,
  line(B, 'M700 118H836M705 122V258M828 122V258M760 84H836M780 66V66H836V84', 6),
  line(D, 'M720 132V156M756 132V156M782 132V156M816 132V156M720 174V198M756 174V198M782 222V244', 11),
  line(G, 'M720 136V152M756 136V152M782 136V152M816 136V152M720 178V194M756 178V194M782 226V240', 4, '4 4'),
  windows([[722, 222, 30, 22]]),
  line(Y, 'M684 140V262M712 140V258M684 138H712', 4, '6 3'), line(Y, 'M800 120L840 104M735 72L745 60H755', 4),
  fill(BR, [694, 150, 12, 12], [694, 192, 12, 14]), line(B, 'M690 165V195M700 170V180', 4),
  line(GR, 'M650 260H875', 6), fill(Y, [740, 282, 58, 12]));

const sect1 = () => view(690, 650,
  levels(670, 900, 72, [132, 175, 217, 265], [706, 758, 790, 839], 268, 286),
  line(G, 'M686 78V265M706 78V130M686 78H706'), fill(R, [684, 76, 8, 5], [690, 130, 5, 5]),
  line(C, 'M706 132V265M758 132V265M790 175V265M836 132V265M706 132L770 84 805 106', 6),
  line(G, 'M702 136L774 80 815 110', 5), hatch([815, 106, 40, 28]), fill(G, [815, 108, 36, 14]),
  line(GR, 'M700 134H850M700 175H850M700 217H850M685 268H885', 5),
  windows([[714, 180, 38, 32], [722, 230, 24, 32], [768, 148, 12, 26], [792, 190, 12, 25], [740, 110, 14, 20]]),
  line(D, 'M796 106V130M850 140V172M850 180V262M730 132V170M845 222V262M706 172H758M770 150V172', 7),
  line(B, 'M732 134V172M842 178V216M842 220V262M712 230V262', 4),
  fill(Y, [720, 100, 22, 7], [724, 158, 18, 9], [806, 158, 20, 5], [808, 202, 22, 9], [806, 250, 20, 10], [795, 66, 10, 7]),
  line(Y, 'M830 100V270M860 98V265M830 102H868', 4, '5 4'),
  fill(Y, [744, 291, 38, 13]));

const sect2 = () => view(690, 650,
  levels(636, 870, 415, [476, 519, 562, 608], [677, 731, 764, 810], 612, 630),
  line(G, 'M677 480L745 426 800 468', 6),
  line(C, 'M677 478L745 428 800 465H826M678 478V608M730 440V608M764 440V565M810 478V608', 6),
  line(GR, 'M672 478H828M672 519H828M672 562H828M655 614H850', 6),
  windows([[684, 482, 36, 30], [684, 526, 36, 30], [690, 572, 24, 32], [738, 446, 16, 22], [740, 484, 18, 28], [740, 526, 18, 30], [768, 484, 30, 28], [768, 526, 30, 28], [768, 576, 28, 22]]),
  fill(D, [678, 486, 6, 26], [678, 526, 6, 26], [724, 486, 5, 20], [760, 526, 5, 28], [800, 490, 8, 22], [800, 530, 8, 24], [820, 530, 8, 70], [738, 574, 20, 4]),
  fill(BR, [740, 598, 40, 6]), line(B, 'M826 466V608M820 580V608', 4),
  fill(Y, [696, 506, 12, 6], [696, 552, 12, 6], [744, 552, 12, 8], [776, 506, 12, 8], [776, 550, 12, 8], [768, 412, 16, 8], [700, 466, 20, 5], [696, 600, 14, 6]),
  line(Y, 'M828 466V608M806 490V520M818 540H828V575H806', 4, '5 3'),
  fill(Y, [717, 638, 34, 12]));

const sect3 = () => view(860, 875,
  levels(130, 365, 70, [146, 187, 231, 283], [185, 243, 307], 283, 300),
  line(G, 'M164 92V280M178 92V280M164 92H185'), line('#d8d8d8', 'M171 96V278', 3, '5 18'),
  fill(R, [161, 90, 5, 6], [170, 104, 5, 5], [170, 146, 5, 5], [170, 190, 5, 5], [170, 256, 5, 5], [161, 276, 6, 6]),
  line(B, 'M164 92H256V104H325V122H316M226 150V278', 5),
  line(C, 'M186 98V280M315 104V280M243 160V232M256 146V188M304 190V232', 6),
  fill(G, [243, 98, 78, 8], [246, 120, 10, 24]),
  line(GR, 'M228 146H315M185 168H200M220 188H315M185 210H200M220 232H315M185 256H200M160 282H355', 6),
  line(D, 'M200 165L225 138M198 168L224 190M200 210L225 188M198 212L224 232M200 254L225 232M198 258L222 280', 11),
  windows([[230, 164, 30, 20], [232, 206, 10, 24], [248, 198, 24, 30], [278, 206, 14, 24], [256, 110, 6, 34]]),
  hollow(B, [[258, 242, 34, 26], [264, 154, 18, 26]]), fill(D, [300, 240, 10, 36], [306, 148, 8, 36], [268, 198, 8, 30]),
  line(B, 'M318 100V124M226 246H244', 6),
  fill(Y, [278, 84, 16, 6], [240, 134, 8, 6], [280, 132, 20, 4], [250, 216, 22, 4], [290, 180, 8, 6], [292, 224, 8, 6], [190, 266, 20, 4], [228, 306, 34, 12]));

/* The small detail sheets of the right column. */
function bit(x, y, w, h, seed) {
  return line(G, `M${x - 12} ${y + 4}H${x + w + 14}M${x - 12} ${y + h - 5}H${x + w + 14}M${x + 4} ${y - 8}V${y + h + 8}M${x + w - 5} ${y - 8}V${y + h + 8}`)
    + hatch([x + 4, y + 6, w - 8, h - 12])
    + scatter(seed, x, y, w - 8, h - 4, 40, [G, G, BR, D, Y])
    + line(C, `M${x} ${y + 5}H${x + w}M${x} ${y + h - 5}H${x + w}M${x + 4} ${y}V${y + h}M${x + w - 4} ${y}V${y + h}`, 5)
    + scatter(seed + 3, x - 10, y - 4, w + 14, h + 4, 14, [Y, Y, R, '#ddd']);
}
const door = (x, y, w, h, seed) => fill('#65686c', [x, y + 4, w, h - 6]) + hatch([x, y + 4, w, h - 6])
  + line('#b0a48e', `M${x + w * .33} ${y + 8}V${y + h - 6}M${x + w * .66} ${y + 8}V${y + h - 6}`, 3, '6 3')
  + scatter(seed, x - 4, y, w, 12, 8, [R]) + scatter(seed + 7, x - 4, y + 10, w + 4, h - 10, 8, [R, '#eee'])
  + fill(Y, [x + w / 2 - 6, y + h, 14, 5]);

const details = () => view(1025, 300,
  bit(62, 38, 60, 48, 3), bit(62, 118, 60, 46, 14), bit(62, 198, 60, 48, 25),
  fill(Y, [64, 94, 58, 12], [64, 174, 58, 13], [64, 252, 58, 13], [120, 64, 24, 9], [124, 146, 22, 8], [40, 40, 20, 8], [40, 128, 22, 12], [42, 218, 20, 8], [122, 218, 10, 10]),
  scatter(61, 66, 44, 54, 38, 30, [Y, B, D]), scatter(71, 66, 122, 54, 38, 34, [Y, B, D]), scatter(81, 66, 204, 54, 38, 30, [Y, B, D]),
  fill(R, [104, 40, 8, 8], [90, 82, 20, 5], [64, 200, 6, 6], [66, 156, 6, 8], [112, 196, 6, 8]),
  line(G, 'M200 60V236M195 80H275M195 122H270M195 166H270M178 222H275M250 70V225M195 236H272'),
  hatch([218, 176, 46, 50]), line(C, 'M202 66V235M262 66V232M192 68H208M240 68H264M195 150H262', 6),
  line(D, 'M218 75L245 100 215 128 243 150 216 176 240 198', 13), line(Y, 'M218 78L245 102 216 128 243 150 216 176', 3, '3 8'),
  line(C, 'M240 82V100M216 130V150M244 150V165', 4), fill(B, [216, 190, 24, 18]), line('#ddd', 'M208 225H260', 5, '5 5'),
  fill(R, [262, 76, 5, 5], [262, 118, 5, 5], [262, 160, 5, 5], [186, 214, 5, 6], [264, 205, 5, 8]),
  fill(Y, [272, 72, 8, 8], [272, 115, 8, 8], [272, 157, 8, 8], [272, 205, 8, 8], [205, 232, 46, 10], [234, 180, 6, 12]),
  line(Y, 'M285 180H320M308 170V198M328 184L342 196', 5), fill(C, [300, 178, 10, 8]), fill(R, [306, 186, 5, 5], [332, 188, 6, 8]),
  note(298, 208, 42, 22),
  bit(40, 318, 52, 32, 34), bit(112, 318, 50, 34, 46), bit(204, 310, 46, 44, 58), bit(298, 312, 36, 42, 67),
  fill(D, [48, 325, 40, 16], [116, 322, 14, 22], [204, 318, 48, 8], [300, 322, 8, 24], [328, 322, 8, 26]),
  fill(G, [216, 328, 30, 16], [310, 322, 16, 28], [136, 328, 18, 16]),
  fill(Y, [50, 326, 30, 4], [54, 336, 30, 4], [60, 354, 14, 8], [162, 360, 20, 5], [302, 360, 26, 8], [136, 326, 8, 8], [118, 308, 10, 8]),
  bit(62, 446, 44, 52, 74), bit(160, 448, 50, 48, 83), bit(260, 404, 42, 94, 95),
  fill('#65686c', [66, 460, 38, 30], [166, 464, 40, 24], [268, 414, 26, 36], [264, 468, 36, 26]), hatch([66, 460, 38, 30], [166, 464, 40, 24], [268, 414, 26, 36], [264, 468, 36, 26]),
  line(C, 'M52 444L104 470M258 456H304M258 494H304', 5),
  fill(R, [64, 446, 5, 5], [196, 488, 12, 6], [204, 448, 6, 8], [284, 436, 5, 5], [300, 470, 5, 6], [268, 486, 5, 6]),
  fill(Y, [174, 498, 18, 5], [270, 500, 18, 4], [208, 470, 10, 6], [182, 470, 10, 6]),
  fill(Y, [86, 549, 52, 9], [200, 549, 58, 9]),
  fill('#083a7c', [74, 562, 86, 52], [204, 562, 86, 52]),
  line('#0c63bb', 'M73 562H161V613H73zM73 576H161M73 588H161M73 600H161M203 562H291V613H203zM203 576H291M203 588H291M203 600H291', 3),
  fill(Y, [90, 570, 13, 40], [220, 570, 12, 26], [250, 582, 12, 20]),
  scatter(111, 110, 566, 44, 42, 9, [Y]), scatter(121, 206, 566, 76, 42, 12, [Y]),
  line(B, 'M20 673H348M20 757H348', 4),
  door(68, 626, 42, 50, 131), door(126, 628, 30, 48, 142), door(170, 640, 16, 38, 153), door(200, 640, 16, 38, 164), door(236, 628, 30, 52, 175), door(286, 626, 44, 52, 186),
  door(92, 714, 40, 42, 197), door(146, 716, 24, 38, 208), door(192, 716, 16, 40, 219), door(222, 718, 8, 36, 225), door(248, 712, 26, 44, 236), door(288, 714, 26, 42, 247),
  fill(Y, [36, 663, 24, 6], [66, 750, 24, 4], [264, 694, 6, 16]), scatter(257, 250, 696, 20, 22, 18, [R, B, Y]));

define('drawing-view', `
  :host { display: block; position: relative; flex: 1; min-height: 0; overflow: hidden; background: #212830; }
  .controls { position: absolute; left: 3px; top: 6px; display: flex; font-size: 12px; }
  svg { width: 100%; height: 100%; }
  .title { font: 300 21px "Liberation Sans Narrow", "Roboto Condensed", "Archivo Narrow", "Barlow Condensed", "Open Sans Condensed", Oswald, "DejaVu Sans Condensed", sans-serif; fill: #ffbf00; }
`, `
  <svg role="img" aria-label="Model space"></svg>
  <div class="controls"><button type="button">[−]</button><button type="button">[Top]</button><button type="button">[2D Wireframe]</button></div>
`, (el, root) => {
  let out = '';
  for (let i = 0; i < 5; i++) out += sheet(700, 307 + i * 115, 1);
  for (let i = 0; i < 6; i++) out += sheet(866, 307 + i * 115, 1);
  for (let i = 0; i < 3; i++) out += sheet(1031, 307 + i * 86, .75);
  const cover = `<path d="M700.500 190.500h165v117h-165z" fill="none" stroke="#8a773c"/>
    <path d="M713.500 195.500h148v107h-148z" fill="none" stroke="#8a773c"/>
    <path d="M712.500 303.500v-109h149v109" fill="none" stroke="#1b49f2"/><path d="M712 303.500h150" stroke="#1b49f2"/>`
    + view(690, 180, fill('#fff', [153, 153, 18, 15], [180, 153, 15, 15], [204, 153, 45, 15], [255, 153, 18, 15], [282, 153, 18, 15], [306, 153, 45, 15], [360, 153, 24, 15], [393, 153, 33, 15]));
  root.querySelector('svg').innerHTML = `
    <defs><pattern id="grain" width="9" height="9" patternUnits="userSpaceOnUse">
      <path fill="#858789" d="M0 0h3v3H0zM6 3h3v3H6zM3 6h3v3H3z"/><path fill="#5f6266" d="M3 0h3v3H3zM0 6h3v3H0z"/>
    </pattern></defs>
    <g transform="translate(0 -177)" shape-rendering="crispEdges">
      ${out}${cover}
      ${plan1()}${plan2(420, 40, true)}${plan2(535, 60, false)}${plan4()}${plan5()}
      ${elev1()}${elev2()}${elev3()}${sect1()}${sect2()}${sect3()}${details()}
      <text class="title" x="883" y="288" shape-rendering="auto">HỒ SƠ KIẾN TRÚC</text>
      <g fill="none" stroke="#f4f4f4">
        <path d="M1336.500 689v45M1336.500 741v45M1288 737.500h45M1340 737.500h45M1333.500 734.500h6v6h-6z"/>
        <path d="M20.500 940v50.500H71M16.500 985.500h9v9h-9z"/>
        <path d="M22 923l6 6 7-6M28.500 929v7M75 977l13 12M88 977l-13 12" shape-rendering="auto"/>
      </g>
    </g>`;
});

define('layout-tabs', `
  :host { display: flex; align-items: flex-start; }
  button { position: relative; height: 17px; padding: 0 12px; color: #abb1ba; line-height: 15px; white-space: nowrap; isolation: isolate; }
  button::before { content: ""; position: absolute; z-index: -1; inset: 0 2px; border-radius: 0 0 8px 8px; background: #2e3645; }
  .active { color: #fff; font-weight: bold; }
  .active::before { background: #3c4555; }
`, ``, (el, root) => {
  const names = ['Model', 'MB TRET-KT.01', 'MB LAU 1-KT.02', 'MB LAU 2-KT.03', 'MB AP MAI -KT.04', 'MB MAI-KT.05', 'CUA DI', 'CUA SO', '+'];
  root.innerHTML += names.map((n, i) => `<button type="button" class="${i ? '' : 'active'}">${n}</button>`).join('');
});

define('status-bar', `
  :host { display: flex; align-items: flex-start; gap: 3px; padding: 1px 2px 0 0; color: #fff; }
  .cell { display: flex; align-items: center; height: 24px; padding: 0 4px; gap: 9px; background: #3c4555; }
  .cell button { display: block; }
  .wide { padding: 0 5px 0 4px; }
  .tools { padding: 0 2px 0 1px; gap: 5px; }
  .tools button { margin-right: 4px; }
`, `
  <div class="cell"><button type="button">MODEL</button></div>
  <div class="cell wide"><button aria-label="Grid">${svg('grid')}</button><button aria-label="Snap">${svg('snap')}</button>${svg('caret')}</div>
  <div class="cell tools"><button style="margin: 0" aria-label="Ortho">${svg('ortho')}</button><button aria-label="Polar">${svg('polar')}</button>${svg('caret')}<button style="margin: 0 4px" aria-label="Tracking">${svg('track')}</button>${svg('caret')}</div>
`);

define('task-bar', `
  :host { display: flex; height: 40px; background: linear-gradient(90deg, #30311f 0, #23322a 22%, #27373a 50%, #20302f 80%, #1b2c30 100%); font-family: "Open Sans", sans-serif; }
  .start { width: 48px; display: grid; place-items: center; }
  .search { display: flex; align-items: center; box-sizing: border-box; width: 288px; height: 39px; padding-left: 12px; gap: 11px; background: #f2f2f2; }
  input { flex: 1; min-width: 0; border: 0; padding: 0; background: none; outline: 0; font: 14px "Open Sans", sans-serif; color: #222; }
  input::placeholder { color: #2b2b2b; opacity: 1; }
  .apps { display: flex; gap: 9px; padding-left: 4px; }
  .apps button { position: relative; display: grid; place-items: center; box-sizing: border-box; width: 40px; height: 40px; border-bottom: 2px solid transparent; }
  .apps button.open { border-color: #76b9ed; }
  .lbl { position: absolute; font-weight: bold; line-height: 12px; }
  .zalo { font-size: 8px; color: #1468f0; }
  .pdf { font-size: 6px; color: #fff; bottom: 6px; line-height: 8px; }
  .ps { display: grid; place-items: center; width: 21px; height: 21px; border-radius: 4px; background: #001e36; color: #31a8ff; font-weight: bold; font-size: 11px; }
  .tray { position: relative; display: flex; align-items: center; gap: 8px; margin-left: auto; font-size: 14px; color: #fff; }
  .tray b { position: absolute; left: 15px; top: 7px; font-size: 9px; line-height: 14px; }
`, `
  <button class="start" aria-label="Start">${svg('windows')}</button>
  <label class="search">${svg('search')}<input type="text" placeholder="Type here to search" aria-label="Type here to search">${svg('owl')}</label>
  <div class="apps">
    <button aria-label="Task view">${svg('taskView')}</button>
    <button aria-label="Copilot" style="margin-left: 2px">${svg('copilot')}</button>
    <button aria-label="Edge">${svg('edge')}</button>
    <button class="open" aria-label="File Explorer">${svg('folder')}</button>
    <button class="open" aria-label="Chrome">${svg('chrome')}</button>
    <button class="open" aria-label="Word">${svg('word')}</button>
    <button class="open" aria-label="Zalo">${svg('zaloBubble')}<span class="lbl zalo">Zalo</span></button>
    <button class="open" aria-label="Foxit PDF">${svg('foxit')}<span class="lbl pdf">PDF</span></button>
    <button class="open" aria-label="Photoshop"><span class="ps">Ps</span></button>
    <button class="open" aria-label="AutoCAD">${svg('acad')}</button>
  </div>
  <div class="tray">${svg('weather')}<b>3</b><span>26</span></div>
`);

define('site-logo', `
  :host { display: flex; flex-direction: column; justify-content: flex-end; align-items: center; box-sizing: border-box; height: 107px; width: 279px; padding-bottom: 3px; background: #fff; font-family: Roboto, sans-serif; white-space: nowrap; }
  svg { position: absolute; right: 0; top: 0; }
  .name { position: relative; font-size: 28px; line-height: 30px; font-weight: bold; color: #ec1c2e; }
  .name small { font-size: 20px; }
  .sub { font-size: 15px; line-height: 20px; color: #4c4c4e; }
`, `
  <svg width="279" height="107" viewBox="0 0 279 107" aria-hidden="true">
    <path fill="#ec1c2e" d="M158 47q10-4 22-9L214 4l24 21V15l9 3v15l26 31q-30-14-68-16l27-3-18-18-17 15q8 0 12 1-26-1-51 4z"/>
    <path fill="#ec1c2e" d="M154 53q46-13 86 2l33 9-14-2q-50-14-105-9z"/>
    <path fill="#fff" d="M196 39q8 1 14 3l-17-1zM158 49q40-8 80-1l12 5q-42-10-92-4z"/>
  </svg>
  <span class="name">THUVIENBANVESO<small>.vn</small></span>
  <span class="sub">THƯ VIỆN BẢN VẼ LỚN NHẤT VIỆT NAM</span>
`);

define('water-mark', `
  :host { display: block; font: 900 31px/36px Raleway, Lato, sans-serif; white-space: nowrap; pointer-events: none; }
`, `<slot></slot>`);

define('cad-app', `
  :host { position: relative; display: flex; flex-direction: column; height: 100vh; }
  .foot { display: flex; justify-content: space-between; box-sizing: border-box; height: 29px; padding-left: 11px; background: #222933; border-top: 1px solid #434c5a; }
  .desk { height: 38px; background: #7a837e; }
  site-logo { position: absolute; top: 0; right: 0; }
  water-mark { position: absolute; left: 50%; transform: translate(-50%, -50%); }
  .center { top: 50%; color: #ff3b3f; }
  .low { bottom: 84px; color: #bdbdbd; transform: translate(-50%, 0); }
`, `
  <title-bar></title-bar>
  <ribbon-tabs></ribbon-tabs>
  <cad-ribbon></cad-ribbon>
  <file-tabs></file-tabs>
  <drawing-view></drawing-view>
  <div class="foot"><layout-tabs></layout-tabs><status-bar></status-bar></div>
  <task-bar></task-bar>
  <div class="desk"></div>
  <site-logo></site-logo>
  <water-mark class="center">Thuvienbanveso.vn</water-mark>
  <water-mark class="low">Ban quyen: Thuvienbanveso.vn</water-mark>
`);
</script>
</body>
</html>
